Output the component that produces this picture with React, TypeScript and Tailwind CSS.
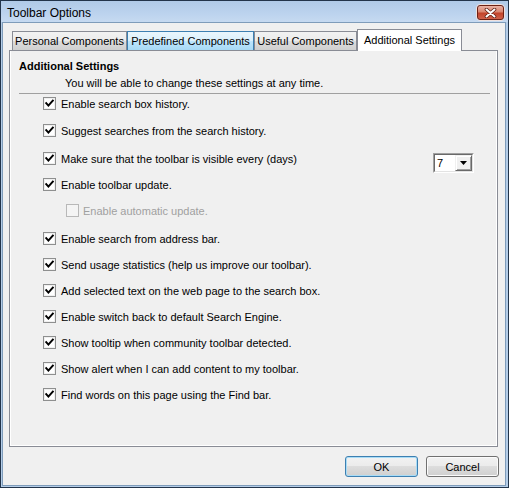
import React from "react";

type Row = {
  label: string;
  mt: string;
  disabled?: boolean;
  indent?: boolean;
  dropdown?: boolean;
};

const rows: Row[] = [
  { label: "Enable search box history.", mt: "mt-[3px]" },
  { label: "Suggest searches from the search history.", mt: "mt-[14px]" },
  { label: "Make sure that the toolbar is visible every (days)", mt: "mt-[15px]", dropdown: true },
  { label: "Enable toolbar update.", mt: "mt-[13px]" },
  { label: "Enable automatic update.", mt: "mt-[13px]", disabled: true, indent: true },
  { label: "Enable search from address bar.", mt: "mt-[15px]" },
  { label: "Send usage statistics (help us improve our toolbar).", mt: "mt-[13px]" },
  { label: "Add selected text on the web page to the search box.", mt: "mt-[13px]" },
  { label: "Enable switch back to default Search Engine.", mt: "mt-[13px]" },
  { label: "Show tooltip when community toolbar detected.", mt: "mt-[13px]" },
  { label: "Show alert when I can add content to my toolbar.", mt: "mt-[13px]" },
  { label: "Find words on this page using the Find bar.", mt: "mt-[13px]" },
];

function CheckBox({ disabled }: { disabled?: boolean }) {
  if (disabled) {
    return (
      <div className="w-[13px] h-[13px] shrink-0 border border-[#b8b8b8] bg-[#f4f4f4]" />
    );
  }
  return (
    <div className="w-[13px] h-[13px] shrink-0 border border-[#8e8f8f] bg-white flex items-center justify-center shadow-[inset_0_0_0_1px_#f0f0f0]">
      <svg width="9" height="9" viewBox="0 0 9 9">
        <path d="M1.2 4.2 L3.4 6.6 L7.8 1.6" fill="none" stroke="#000" strokeWidth="2" strokeLinecap="square" strokeLinejoin="miter" />
      </svg>
    </div>
  );
}

function Dropdown() {
  return (
    <div className="ml-auto mr-[23px] self-start mt-[1px] w-[41px] h-[20px] shrink-0 border border-t-[#a0a0a0] border-l-[#a0a0a0] border-b-white border-r-white">
      <div className="w-full h-full flex border border-t-[#696969] border-l-[#696969] border-b-[#e3e3e3] border-r-[#e3e3e3] bg-white">
        <div className="flex-1 pl-[2px] leading-[17px] text-[11px] text-black">7</div>
        <div className="w-[17px] h-full bg-[#f0f0f0] border border-t-[#f0f0f0] border-l-[#f0f0f0] border-b-[#696969] border-r-[#696969] shadow-[inset_1px_1px_0_#fff,inset_-1px_-1px_0_#a0a0a0] flex items-center justify-center">
          <svg width="7" height="4" viewBox="0 0 7 4">
            <path d="M0 0 H7 L3.5 4 Z" fill="#000" />
          </svg>
        </div>
      </div>
    </div>
  );
}

function Tab({ label, kind, width }: { label: string; kind: "normal" | "hover" | "selected"; width: string }) {
  if (kind === "selected") {
    return (
      <div className={`${width} h-[22px] bg-white border-l border-t border-r border-[#898c95] flex items-center justify-center relative z-10`}>
        {label}
      </div>
    );
  }
  if (kind === "hover") {
    return (
      <div className={`${width} h-[19px] mb-[1px] pt-[1px] border-l border-t border-r border-[#3c7fb1] bg-[linear-gradient(to_bottom,#eaf6fd_0%,#d9f0fc_50%,#bee6fd_50%,#a7d9f5_100%)] flex items-center justify-center`}>
        {label}
      </div>
    );
  }
  return (
    <div className={`${width} h-[19px] mb-[1px] pt-[1px] border-l border-t border-r border-[#898c95] bg-[linear-gradient(to_bottom,#f2f2f2_0%,#ebebeb_50%,#dddddd_50%,#cfcfcf_100%)] flex items-center justify-center`}>
      {label}
    </div>
  );
}

export default function App() {
  return (
    <div className="w-[509px] h-[488px] border border-[#22344a] bg-[#b4cde8] flex flex-col font-['Liberation_Sans',Arial,sans-serif] text-[11px] leading-[13px] text-black select-none overflow-hidden">
      {/* Title bar */}
      <div className="h-[21px] shrink-0 flex items-start justify-between pl-[6px] pr-[3px] bg-[linear-gradient(to_bottom,#b0cae8_0%,#bcd3ee_60%,#c6daf1_100%)]">
        <div className="text-[12px] leading-[21px] pt-[2px] text-black">Toolbar Options</div>
        <div className="mt-[3px] w-[29px] h-[17px] rounded-[4px] border border-[#f0e0dc] flex">
          <div className="flex-1 rounded-[3px] border border-[#6e2115] bg-[linear-gradient(to_bottom,#eab2a5_0%,#d98570_45%,#c2432a_55%,#d0614a_100%)] flex items-center justify-center">
            <svg width="13" height="10" viewBox="0 0 13 10">
              <path d="M2.5 1.5 L10.5 8.5 M10.5 1.5 L2.5 8.5" stroke="#5b1a0f" strokeWidth="3.6" strokeLinecap="round" />
              <path d="M2.5 1.5 L10.5 8.5 M10.5 1.5 L2.5 8.5" stroke="#ffffff" strokeWidth="2.1" strokeLinecap="round" />
            </svg>
          </div>
        </div>
      </div>

      {/* Client area */}
      <div className="flex-1 ml-[1px] mr-[2px] mb-[1px] border border-[#7f9cba] bg-[#f0f0f0] flex flex-col pt-[6px] pl-[6px] pr-[7px] pb-[8px]">
        {/* Tabs */}
        <div className="h-[22px] -mb-[1px] pl-[3px] flex items-end relative z-10 shrink-0">
          <Tab label="Personal Components" kind="normal" width="w-[115px]" />
          <Tab label="Predefined Components" kind="hover" width="w-[127px]" />
          <Tab label="Useful Components" kind="normal" width="w-[103px]" />
          <Tab label="Additional Settings" kind="selected" width="w-[105px]" />
        </div>

        {/* Panel */}
        <div className="h-[397px] shrink-0 border border-[#898c95] bg-[#f0f0f0] shadow-[inset_1px_0_0_#fff,inset_0_-1px_0_#fff,inset_-1px_0_0_#fff] flex flex-col pt-[9px]">
          <div className="pl-[9px] font-bold">Additional Settings</div>
          <div className="pl-[55px] mt-[4px]">You will be able to change these settings at any time.</div>
          <div className="mt-[3px] ml-[9px] mr-[7px] h-px bg-[#a0a0a0]" />
          {rows.map((r) => (
            <div
              key={r.label}
              className={`${r.mt} h-[13px] flex items-center ${r.indent ? "pl-[56px]" : "pl-[33px]"}`}
            >
              <CheckBox disabled={r.disabled} />
              <span className={`${r.disabled ? "ml-[4px] text-[#a0a0a0]" : "ml-[5px]"} whitespace-nowrap pt-[1px]`}>{r.label}</span>
              {r.dropdown && <Dropdown />}
            </div>
          ))}
        </div>

        {/* Buttons */}
        <div className="mt-[9px] flex justify-end gap-[8px]">
          <button className="w-[73px] h-[21px] rounded-[3px] border border-[#3c7fb1] shadow-[inset_0_0_0_1px_#a9dcf6] bg-[linear-gradient(to_bottom,#f2f2f2_0%,#ebebeb_50%,#dddddd_50%,#cfcfcf_100%)] text-[11px] leading-[13px] text-black pt-[1px]">
            OK
          </button>
          <button className="w-[73px] h-[21px] mr-[-1px] rounded-[3px] border border-[#707070] shadow-[inset_0_0_0_1px_#fbfbfb] bg-[linear-gradient(to_bottom,#f2f2f2_0%,#ebebeb_50%,#dddddd_50%,#cfcfcf_100%)] text-[11px] leading-[13px] text-black pt-[1px]">
            Cancel
          </button>
        </div>
      </div>
    </div>
  );
}
